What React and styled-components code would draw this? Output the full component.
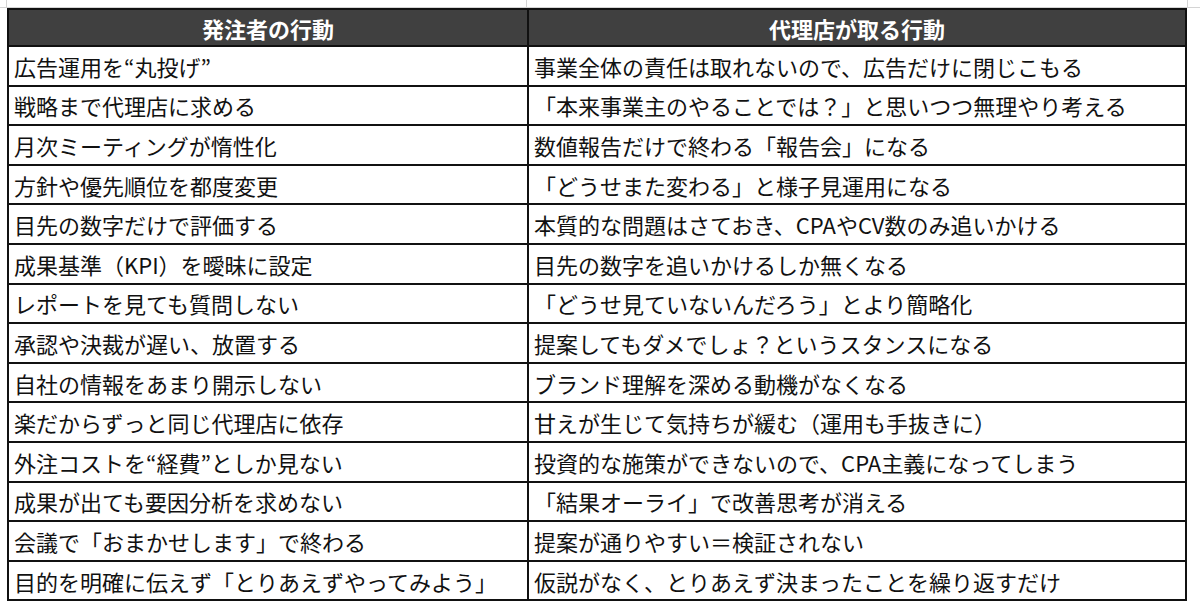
import React from 'react';
import styled, { createGlobalStyle } from 'styled-components';

const GlobalStyle = createGlobalStyle`
  html, body {
    margin: 0;
    padding: 0;
    background: #ffffff;
  }
  body {
    font-family: "Noto Sans CJK JP", "Noto Sans", sans-serif;
  }
`;

const Sheet = styled.div`
  width: 1200px;
  height: 616px;
  overflow: hidden;
  background: #ffffff;
`;

// faint spreadsheet gridlines above the table
const GridStrip = styled.div`
  display: grid;
  grid-template-columns: 7px 520px 661px 1fr;
  height: 7px;
  border-bottom: 1px solid #d4d4d4;
`;

const GridCell = styled.div`
  border-right: ${({ $last }) => ($last ? 'none' : '1px solid #d4d4d4')};
`;

const Wrap = styled.div`
  padding-left: 7px;
`;

const Table = styled.table`
  width: 1180px;
  border-collapse: collapse;
  table-layout: fixed;
  border: 2px solid #111;
`;

const HeadCell = styled.th`
  height: 35px;
  padding: 0;
  background: #404040;
  color: #ffffff;
  font-size: 22px;
  font-weight: 700;
  text-align: center;
  border: 2px solid #111;
`;

const Cell = styled.td`
  height: 37.6px;
  padding: 0 5px;
  font-size: 22px;
  color: #111;
  white-space: nowrap;
  border: 2px solid #111;
  line-height: 1;
`;

const rows = [
  ['広告運用を“丸投げ”', '事業全体の責任は取れないので、広告だけに閉じこもる'],
  ['戦略まで代理店に求める', '「本来事業主のやることでは？」と思いつつ無理やり考える'],
  ['月次ミーティングが惰性化', '数値報告だけで終わる「報告会」になる'],
  ['方針や優先順位を都度変更', '「どうせまた変わる」と様子見運用になる'],
  ['目先の数字だけで評価する', '本質的な問題はさておき、CPAやCV数のみ追いかける'],
  ['成果基準（KPI）を曖昧に設定', '目先の数字を追いかけるしか無くなる'],
  ['レポートを見ても質問しない', '「どうせ見ていないんだろう」とより簡略化'],
  ['承認や決裁が遅い、放置する', '提案してもダメでしょ？というスタンスになる'],
  ['自社の情報をあまり開示しない', 'ブランド理解を深める動機がなくなる'],
  ['楽だからずっと同じ代理店に依存', '甘えが生じて気持ちが緩む（運用も手抜きに）'],
  ['外注コストを“経費”としか見ない', '投資的な施策ができないので、CPA主義になってしまう'],
  ['成果が出ても要因分析を求めない', '「結果オーライ」で改善思考が消える'],
  ['会議で「おまかせします」で終わる', '提案が通りやすい＝検証されない'],
  ['目的を明確に伝えず「とりあえずやってみよう」', '仮説がなく、とりあえず決まったことを繰り返すだけ'],
];

export default function App() {
  return (
    <Sheet>
      <GlobalStyle />
      <GridStrip>
        <GridCell />
        <GridCell />
        <GridCell />
        <GridCell $last />
      </GridStrip>
      <Wrap>
        <Table>
          <colgroup>
            <col style={{ width: 520 }} />
            <col />
          </colgroup>
          <thead>
            <tr>
              <HeadCell>発注者の行動</HeadCell>
              <HeadCell>代理店が取る行動</HeadCell>
            </tr>
          </thead>
          <tbody>
            {rows.map(([client, agency]) => (
              <tr key={client}>
                <Cell>{client}</Cell>
                <Cell>{agency}</Cell>
              </tr>
            ))}
          </tbody>
        </Table>
      </Wrap>
    </Sheet>
  );
}
